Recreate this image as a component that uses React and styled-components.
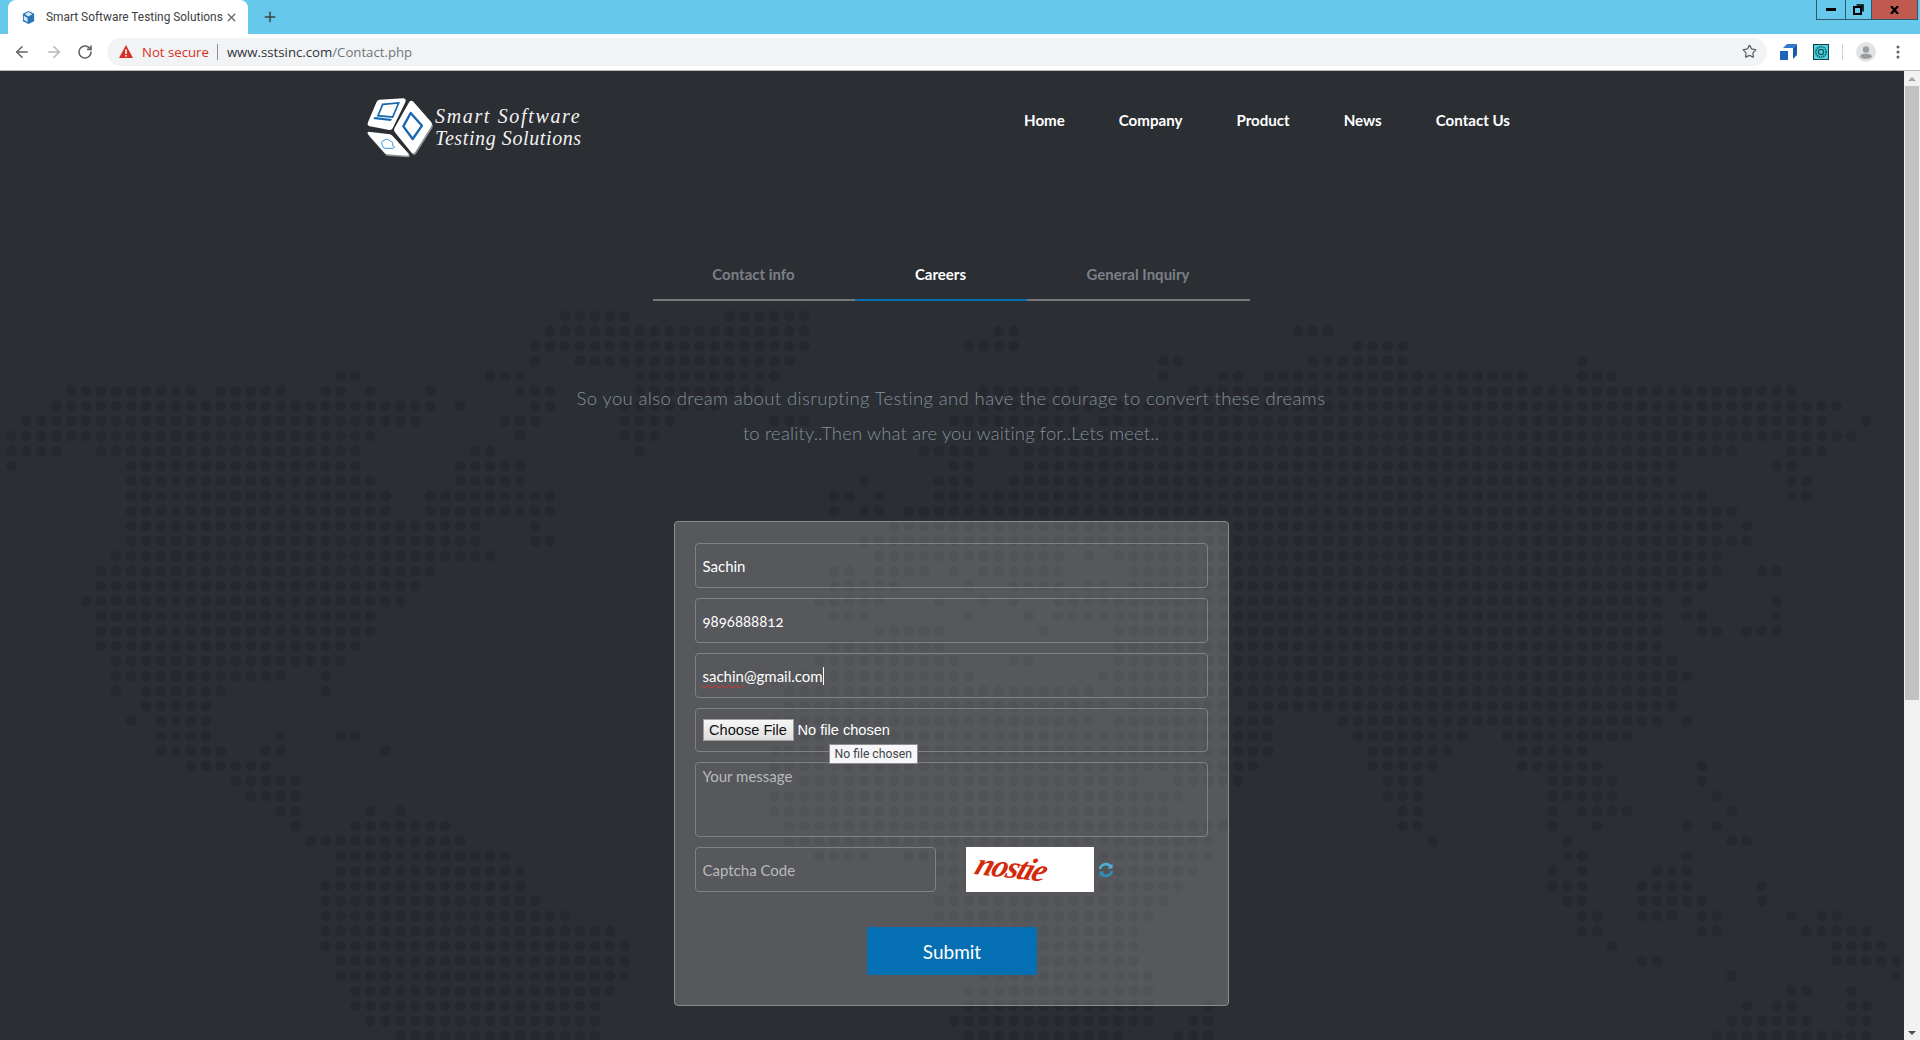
import React, { useMemo } from 'react'
import styled, { createGlobalStyle } from 'styled-components'
import { ArrowLeft, ArrowRight, RotateCw, Star, X, Plus } from 'lucide-react'

const GlobalStyle = createGlobalStyle`
  html, body {
    margin: 0;
    height: 100%;
    overflow: hidden;
    background: #2b2e33;
  }
  * { box-sizing: border-box; }
`

const UI_FONT = '"Lato", "Open Sans", sans-serif'
const CHROME_FONT = 'Roboto, "Open Sans", sans-serif'

const Screen = styled.div`
  display: flex;
  flex-direction: column;
  width: 1920px;
  height: 1040px;
  overflow: hidden;
`

/* browser chrome */
const TabStrip = styled.div`
  display: flex;
  align-items: flex-end;
  height: 34px;
  padding-left: 8px;
  background: #66c9ec;
`

const BrowserTab = styled.div`
  display: flex;
  align-items: center;
  width: 240px;
  height: 34px;
  padding: 0 10px 0 13px;
  background: #fff;
  border-radius: 8px 8px 0 0;
  font: 11.9px ${CHROME_FONT};
  color: #3c4043;
`

const TabTitle = styled.span`
  flex: 1;
  margin-left: 10px;
  white-space: nowrap;
`

const NewTab = styled.div`
  display: flex;
  align-items: center;
  height: 34px;
  margin-left: 14px;
  color: #3c4043;
`

const WindowButtons = styled.div`
  display: flex;
  align-self: flex-start;
  height: 20px;
  margin-left: auto;
  margin-right: 2px;
  border: 1px solid #2d5a6e;
  border-top: 0;
`

const WindowButton = styled.div`
  display: flex;
  align-items: center;
  justify-content: center;
  width: ${p => p.$width}px;
  background: ${p => p.$close ? '#c0594f' : 'transparent'};
  border-left: ${p => p.$first ? '0' : '1px solid #2d5a6e'};
`

const Toolbar = styled.div`
  display: flex;
  align-items: center;
  height: 37px;
  padding: 0 0 1px 13px;
  background: #fff;
  border-bottom: 1px solid #b9b9b9;
`

const NavIcon = styled.div`
  display: flex;
  width: 18px;
  margin-right: 14px;
  color: ${p => p.$muted ? '#b4b6b8' : '#5f6368'};
`

const Omnibox = styled.div`
  display: flex;
  align-items: center;
  width: 1660px;
  height: 28px;
  margin-left: -2px;
  padding: 0 10px 0 12px;
  background: #f1f3f4;
  border-radius: 14px;
  font: 13.2px "Open Sans", sans-serif;
`

const NotSecure = styled.span`
  margin-left: 9px;
  color: #d93025;
`

const OmniDivider = styled.span`
  width: 1px;
  height: 16px;
  margin: 0 9px 0 8px;
  background: #8a8d91;
`

const Host = styled.span`
  color: #30343a;
`

const UrlPath = styled.span`
  color: #70757a;
`

const StarBox = styled.div`
  display: flex;
  margin-left: auto;
  color: #5f6368;
`

const Extensions = styled.div`
  display: flex;
  align-items: center;
  margin-left: 13px;
`

const ExtSlot = styled.div`
  display: flex;
  margin-right: ${p => p.$gap}px;
`

const ToolbarDivider = styled.span`
  width: 1px;
  height: 16px;
  margin: 0 13px 0 0;
  background: #d0d2d4;
`

/* page */
const Body = styled.div`
  display: flex;
  flex: 1;
  min-height: 0;
`

const Page = styled.div`
  position: relative;
  flex: 1;
  overflow: hidden;
  background: #2b2e33;
  font-family: ${UI_FONT};
`

const DotMap = styled.svg`
  position: absolute;
  left: 0;
  top: 0;
  fill: #26282d;
`

const Content = styled.div`
  position: relative;
  width: 1170px;
  margin-left: 366px;
`

const Header = styled.header`
  display: flex;
  align-items: center;
  justify-content: space-between;
  height: 97px;
  padding-right: 26px;
`

const Brand = styled.div`
  display: flex;
  align-items: center;
  margin-top: 14px;
  margin-left: -6px;
`

const LogoMark = styled.div`
  display: flex;
  margin-top: 4px;
`

const BrandName = styled.div`
  margin-left: -5px;
  font: italic 20px/22px "Liberation Serif", serif;
  color: #f2f2f2;
  white-space: nowrap;
`

const BrandLine = styled.div`
  letter-spacing: ${p => p.$spacing}px;
`

const Menu = styled.nav`
  display: flex;
  gap: 54px;
`

const MenuItem = styled.a`
  font-size: 15.1px;
  font-weight: 700;
  color: #fff;
`

const Tabs = styled.div`
  display: flex;
  justify-content: center;
  margin-top: 81px;
`

const Tab = styled.div`
  padding: 15px 60px;
  width: ${p => p.$width}px;
  white-space: nowrap;
  font-size: 15px;
  line-height: 20px;
  font-weight: 700;
  color: ${p => p.$active ? '#fff' : '#7b8087'};
  border-bottom: 2px solid ${p => p.$active ? '#056fb3' : '#77787b'};
  display: flex;
  justify-content: center;
`

const Intro = styled.div`
  margin: 80px 0 70px;
  text-align: center;
  font-size: 18.5px;
  font-weight: 300;
  line-height: 35px;
  color: #84909c;
`

const IntroLine = styled.div`
  letter-spacing: ${p => p.$spacing}px;
`

const FormPanel = styled.form`
  display: flex;
  flex-direction: column;
  gap: 10px;
  width: 555px;
  height: 485px;
  margin: 0 auto;
  padding: 21px 20px;
  background: rgba(255, 255, 255, 0.205);
  border: 1px solid #8b8c8f;
  border-radius: 4px;
`

const fieldStyles = `
  display: block;
  width: 100%;
  padding: 0 7px;
  background: transparent;
  border: 1px solid #808185;
  border-radius: 4px;
  outline: none;
  font-family: ${UI_FONT};
  font-size: 15px;
  color: #fff;
  font-feature-settings: "onum";
  &::placeholder { color: #b9babc; opacity: 1; }
`

const TextField = styled.input`
  ${fieldStyles}
  height: 45px;
`

const TypedField = styled.div`
  ${fieldStyles}
  display: flex;
  align-items: center;
  height: 45px;
`

const Misspelled = styled.span`
  text-decoration: underline wavy #e0312c 1px;
  text-underline-offset: 2px;
`

const Caret = styled.span`
  width: 1px;
  height: 18px;
  background: #fff;
`

const FileBox = styled.div`
  position: relative;
  display: flex;
  align-items: center;
  height: 44px;
  padding: 0 7px;
  border: 1px solid #808185;
  border-radius: 4px;
`

const FileInput = styled.input`
  font: 14.6px "Liberation Sans", Arial, sans-serif;
  color: #fff;

  &::file-selector-button {
    width: 91px;
    height: 22px;
    margin-right: 4px;
    padding: 0;
    font: 14.6px "Liberation Sans", Arial, sans-serif;
    color: #111;
    background: linear-gradient(#f6f6f6, #dedede);
    border: 1px solid #a0a0a0;
    border-radius: 0;
  }
`

const Tooltip = styled.div`
  position: absolute;
  left: 133px;
  top: 35px;
  z-index: 2;
  padding: 0 5px;
  height: 20px;
  background: #f6f6fb;
  border: 1px solid #8f8f8f;
  font: 12.2px/18px ${CHROME_FONT};
  color: #444;
  white-space: nowrap;
`

const MessageField = styled.textarea`
  ${fieldStyles}
  height: 75px;
  padding-top: 3px;
  line-height: 20px;
  resize: none;
`

const CaptchaRow = styled.div`
  display: flex;
  align-items: center;
`

const CaptchaInput = styled.input`
  ${fieldStyles}
  width: 241px;
  height: 45px;
`

const CaptchaImage = styled.div`
  display: flex;
  align-items: center;
  width: 128px;
  height: 45px;
  margin-left: 30px;
  padding: 0 0 6px 11px;
  background: #fff;
`

const CaptchaText = styled.span`
  display: inline-block;
  font: italic 700 32px/36px "Liberation Serif", serif;
  color: #d42a0c;
  letter-spacing: -1.5px;
  transform: rotate(6deg) skewX(-14deg);
`

const Refresh = styled.div`
  display: flex;
  margin-left: 4px;
`

const SubmitButton = styled.button`
  align-self: center;
  width: 170px;
  height: 48px;
  margin: 25px 0 0 2px;
  background: #056fb3;
  border: 0;
  border-radius: 2px;
  font-family: ${UI_FONT};
  font-size: 19px;
  color: #fff;
`

/* scrollbar */
const ScrollTrack = styled.div`
  display: flex;
  flex-direction: column;
  align-items: center;
  width: 16px;
  background: #f1f1f1;
`

const ScrollArrow = styled.div`
  width: 0;
  height: 0;
  margin: ${p => p.$up ? '6px 0 5px' : 'auto 0 5px'};
  border-left: 4px solid transparent;
  border-right: 4px solid transparent;
  border-bottom: ${p => p.$up ? '4px solid #a3a3a3' : '0'};
  border-top: ${p => p.$up ? '0' : '4px solid #505050'};
`

const ScrollThumb = styled.div`
  width: 14px;
  height: 614px;
  background: #c1c1c1;
`

// rows of the dot map: row number, then [first, last] column runs
const MAP_ROWS = [
  [-4, [37, 41], [48, 53]],
  [-3, [36, 53], [66, 67], [86, 88]],
  [-2, [35, 53], [64, 67], [90, 93]],
  [-1, [35, 35], [38, 52], [77, 78], [87, 93], [105, 105]],
  [0, [22, 23], [32, 34], [42, 51], [77, 77], [81, 82], [84, 101], [105, 107]],
  [1, [4, 12], [14, 18], [21, 22], [24, 24], [28, 28], [34, 36], [42, 50], [65, 71], [79, 119]],
  [2, [3, 28], [30, 30], [35, 36], [41, 47], [65, 122]],
  [3, [1, 27], [33, 35], [41, 44], [51, 53], [63, 71], [73, 121], [124, 124]],
  [4, [0, 24], [34, 34], [41, 43], [64, 123]],
  [5, [0, 3], [6, 23], [31, 32], [42, 42], [61, 65], [67, 115], [119, 121]],
  [6, [0, 0], [8, 23], [30, 34], [63, 64], [68, 111], [118, 119]],
  [7, [8, 24], [30, 34], [57, 57], [62, 64], [67, 111], [119, 120]],
  [8, [8, 25], [28, 36], [55, 56], [58, 58], [62, 113], [119, 120]],
  [9, [8, 25], [28, 36], [55, 55], [57, 58], [60, 115]],
  [10, [8, 31], [35, 35], [59, 114], [116, 116]],
  [11, [8, 31], [35, 36], [57, 116]],
  [12, [7, 32], [58, 70], [72, 72], [74, 114]],
  [13, [6, 28], [55, 56], [58, 61], [63, 63], [65, 70], [75, 114], [117, 118]],
  [14, [6, 27], [55, 59], [64, 64], [67, 70], [72, 73], [75, 113]],
  [15, [5, 26], [54, 58], [62, 62], [65, 65], [67, 67], [70, 110], [112, 112], [118, 118]],
  [16, [6, 24], [55, 57], [64, 64], [68, 68], [70, 110], [112, 113], [118, 118]],
  [17, [6, 24], [58, 62], [69, 69], [74, 110], [113, 114], [116, 118]],
  [18, [6, 23], [55, 62], [74, 110]],
  [19, [7, 22], [54, 63], [67, 68], [74, 111]],
  [20, [7, 18], [21, 21], [53, 64], [73, 112]],
  [21, [7, 7], [9, 14], [21, 21], [52, 72], [74, 111]],
  [22, [9, 13], [52, 73], [75, 81], [83, 111]],
  [23, [8, 8], [10, 13], [51, 72], [74, 84], [89, 110], [112, 112]],
  [24, [10, 13], [18, 18], [22, 23], [51, 84], [90, 97], [100, 108]],
  [25, [10, 14], [17, 18], [25, 25], [51, 84], [91, 96], [101, 105]],
  [26, [12, 17], [51, 83], [91, 95], [101, 106], [113, 113]],
  [27, [15, 19], [53, 75], [78, 82], [92, 94], [103, 107], [113, 113]],
  [28, [16, 19], [51, 78], [92, 94], [103, 107], [114, 114]],
  [29, [18, 19], [24, 24], [26, 26], [51, 77], [93, 94], [103, 103], [105, 108], [115, 115]],
  [30, [19, 19], [23, 29], [52, 81], [93, 94], [103, 103], [106, 106], [112, 112], [114, 114]],
  [31, [20, 30], [52, 80], [95, 95], [104, 104], [115, 116]],
  [32, [22, 33], [54, 57], [60, 61], [62, 80], [104, 105], [112, 112]],
  [33, [22, 34], [62, 79], [103, 103], [105, 105], [110, 112]],
  [34, [21, 34], [63, 78], [103, 105], [109, 112], [117, 117]],
  [35, [21, 35], [62, 77], [104, 105], [109, 113], [117, 117]],
  [36, [21, 37], [62, 76], [105, 106], [109, 111], [113, 114], [119, 119], [121, 122]],
  [37, [21, 40], [64, 75], [105, 106], [113, 114], [120, 124]],
  [38, [21, 41], [64, 75], [107, 107], [122, 125]],
  [39, [22, 41], [64, 75], [109, 110], [122, 126]],
  [40, [22, 41], [65, 76], [115, 115], [126, 126]],
  [41, [23, 40], [64, 76], [119, 120], [123, 123]],
  [42, [23, 39], [64, 76], [80, 80], [116, 116], [118, 119], [123, 124]],
  [43, [24, 39], [63, 76], [79, 80], [115, 120], [123, 124]],
  [44, [26, 39], [64, 74], [78, 80], [114, 124]],
]

const WorldDots = () => {
  const dots = useMemo(() => {
    const list = []
    MAP_ROWS.forEach(([row, ...runs]) => {
      runs.forEach(([from, to]) => {
        for (let col = from; col <= to; col++) {
          list.push([11.4 + col * 14.96, 305 + row * 15])
        }
      })
    })
    return list
  }, [])

  return (
    <DotMap width="1904" height="970" viewBox="0 0 1904 970">
      {dots.map(([x, y]) => <circle key={`${x}-${y}`} cx={x} cy={y} r="5.3" />)}
    </DotMap>
  )
}

const Logo = () => (
  <svg width="80" height="80" viewBox="0 0 240 240">
    <g fill="#8d8f92" transform="translate(3 5)">
      <path d="M148 38 Q154 32 160 38 L214 100 Q218 106 214 112 L165 190 Q160 196 154 190 L104 128 Q100 122 104 116 Z" />
      <path d="M26 128 L90 136 Q96 138 100 143 L146 194 Q148 200 140 200 L82 196 Q78 196 74 192 L24 136 Q20 130 26 128 Z" />
    </g>
    <g fill="#fff">
      <path d="M58 32 L130 28 Q140 30 136 40 L98 118 Q94 126 84 122 L30 112 Q20 110 24 100 L50 38 Q52 33 58 32 Z" />
      <path d="M148 38 Q154 32 160 38 L214 100 Q218 106 214 112 L165 190 Q160 196 154 190 L104 128 Q100 122 104 116 Z" />
      <path d="M26 128 L90 136 Q96 138 100 143 L146 194 Q148 200 140 200 L82 196 Q78 196 74 192 L24 136 Q20 130 26 128 Z" />
    </g>
    <path d="M68 46 L116 42 L98 84 L54 80 Z" fill="none" stroke="#1566ae" strokeWidth="5" />
    <path d="M44 84 L96 90 L92 96 L40 90 Z" fill="#1566ae" />
    <path d="M152 72 L186 110 L158 150 L130 112 Z" fill="none" stroke="#1566ae" strokeWidth="7" strokeLinejoin="round" />
    <path d="M68 170 Q60 158 72 154 Q78 146 88 154 Q100 158 98 170 Q110 176 96 178 L76 178 Q66 176 68 170 Z" fill="none" stroke="#3d8fd0" strokeWidth="3" />
  </svg>
)

const Favicon = () => (
  <svg width="15" height="15" viewBox="0 0 16 16">
    <path d="M8 1 L14 4 L14 12 L8 15 L2 12 L2 4 Z" fill="#2a75b8" />
    <path d="M8 2 L12 4.5 L8 7 L4 4.5 Z M3 6 L7 8.5 L7 13 L3 10.5 Z" fill="#d8e8f5" />
  </svg>
)

const WarningIcon = () => (
  <svg width="14" height="13" viewBox="0 0 14 13">
    <path d="M7 0 L14 13 L0 13 Z" fill="#d93025" />
    <rect x="6.2" y="4.5" width="1.6" height="4.5" fill="#fff" />
    <rect x="6.2" y="10" width="1.6" height="1.6" fill="#fff" />
  </svg>
)

const ExtBlue = () => (
  <svg width="17" height="17" viewBox="0 0 17 17">
    <path d="M0 5 L11 5 L11 17 L8 17 L8 8 L0 8 Z" fill="#fff" />
    <path d="M0 8 L8 8 L8 17 L0 17 Z" fill="#1f63b5" />
    <path d="M3 5 L7 1 L17 1 L13 5 Z" fill="#2b7bd0" />
    <path d="M13 5 L17 1 L17 12 L13 16 Z" fill="#1a5aa6" />
  </svg>
)

const ExtCyan = () => (
  <svg width="16" height="16" viewBox="0 0 16 16">
    <rect x="0.5" y="0.5" width="15" height="15" fill="#45d6e0" stroke="#1c3a44" />
    <circle cx="8" cy="8" r="5.2" fill="none" stroke="#16505c" strokeWidth="1.6" strokeDasharray="1.4 0.8" />
    <circle cx="8" cy="8" r="2.6" fill="none" stroke="#16505c" strokeWidth="1.2" />
  </svg>
)

const Avatar = () => (
  <svg width="20" height="20" viewBox="0 0 20 20">
    <circle cx="10" cy="10" r="10" fill="#e2e3e4" />
    <circle cx="10" cy="7.5" r="3.2" fill="#9a9c9f" />
    <path d="M4 15 Q4 11.5 10 11.5 Q16 11.5 16 15 Q13.5 17 10 17 Q6.5 17 4 15 Z" fill="#9a9c9f" />
  </svg>
)

const MoreDots = () => (
  <svg width="4" height="14" viewBox="0 0 4 14" fill="#5f6368">
    <circle cx="2" cy="2" r="1.5" />
    <circle cx="2" cy="7" r="1.5" />
    <circle cx="2" cy="12" r="1.5" />
  </svg>
)

const RefreshIcon = () => (
  <svg width="16" height="16" viewBox="0 0 16 16" fill="none" stroke="#4fb0d8" strokeWidth="2.6">
    <path d="M2 7 A6 6 0 0 1 13 5" />
    <path d="M14 9 A6 6 0 0 1 3 11" stroke="#2f8fba" />
    <path d="M14.5 1.5 L14.5 6.5 L9.5 6.5 Z" fill="#4fb0d8" stroke="none" />
    <path d="M1.5 14.5 L1.5 9.5 L6.5 9.5 Z" fill="#2f8fba" stroke="none" />
  </svg>
)

const App = () => (
  <Screen>
    <GlobalStyle />
    <TabStrip>
      <BrowserTab>
        <Favicon />
        <TabTitle>Smart Software Testing Solutions</TabTitle>
        <X size={13} strokeWidth={2.4} color="#5f6368" />
      </BrowserTab>
      <NewTab><Plus size={16} strokeWidth={2.2} /></NewTab>
      <WindowButtons>
        <WindowButton $first $width={28}>
          <svg width="10" height="3"><rect width="10" height="3" fill="#000" /></svg>
        </WindowButton>
        <WindowButton $width={26}>
          <svg width="11" height="11" fill="none" stroke="#000" strokeWidth="1.6">
            <rect x="1" y="3" width="7" height="7" strokeWidth="2" />
            <path d="M3.5 1 H10 V7.5" />
          </svg>
        </WindowButton>
        <WindowButton $close $width={46}>
          <svg width="9" height="8" stroke="#000" strokeWidth="2.2"><path d="M1 0 L8 8 M8 0 L1 8" /></svg>
        </WindowButton>
      </WindowButtons>
    </TabStrip>

    <Toolbar>
      <NavIcon><ArrowLeft size={18} /></NavIcon>
      <NavIcon $muted><ArrowRight size={18} /></NavIcon>
      <NavIcon><RotateCw size={16} strokeWidth={2.4} /></NavIcon>
      <Omnibox>
        <WarningIcon />
        <NotSecure>Not secure</NotSecure>
        <OmniDivider />
        <Host>www.sstsinc.com</Host>
        <UrlPath>/Contact.php</UrlPath>
        <StarBox><Star size={15} strokeWidth={2} /></StarBox>
      </Omnibox>
      <Extensions>
        <ExtSlot $gap={16}><ExtBlue /></ExtSlot>
        <ExtSlot $gap={13}><ExtCyan /></ExtSlot>
        <ToolbarDivider />
        <ExtSlot $gap={20}><Avatar /></ExtSlot>
        <ExtSlot $gap={0}><MoreDots /></ExtSlot>
      </Extensions>
    </Toolbar>

    <Body>
      <Page>
        <WorldDots />
        <Content>
          <Header>
            <Brand>
              <LogoMark><Logo /></LogoMark>
              <BrandName>
                <BrandLine $spacing={1.65}>Smart Software</BrandLine>
                <BrandLine $spacing={0.6}>Testing Solutions</BrandLine>
              </BrandName>
            </Brand>
            <Menu>
              <MenuItem>Home</MenuItem>
              <MenuItem>Company</MenuItem>
              <MenuItem>Product</MenuItem>
              <MenuItem>News</MenuItem>
              <MenuItem>Contact Us</MenuItem>
            </Menu>
          </Header>

          <Tabs>
            <Tab $width={202}>Contact info</Tab>
            <Tab $width={172} $active>Careers</Tab>
            <Tab $width={223}>General Inquiry</Tab>
          </Tabs>

          <Intro>
            <IntroLine $spacing={0.38}>So you also dream about disrupting Testing and have the courage to convert these dreams</IntroLine>
            <IntroLine $spacing={0.13}>to reality..Then what are you waiting for..Lets meet..</IntroLine>
          </Intro>

          <FormPanel>
            <TextField defaultValue="Sachin" />
            <TextField defaultValue="9896888812" />
            <TypedField>
              <Misspelled>sachin</Misspelled>@gmail.com<Caret />
            </TypedField>
            <FileBox>
              <FileInput type="file" />
              <Tooltip>No file chosen</Tooltip>
            </FileBox>
            <MessageField placeholder="Your message" />
            <CaptchaRow>
              <CaptchaInput placeholder="Captcha Code" />
              <CaptchaImage><CaptchaText>nostie</CaptchaText></CaptchaImage>
              <Refresh><RefreshIcon /></Refresh>
            </CaptchaRow>
            <SubmitButton type="button">Submit</SubmitButton>
          </FormPanel>
        </Content>
      </Page>
      <ScrollTrack>
        <ScrollArrow $up />
        <ScrollThumb />
        <ScrollArrow />
      </ScrollTrack>
    </Body>
  </Screen>
)

export default App
